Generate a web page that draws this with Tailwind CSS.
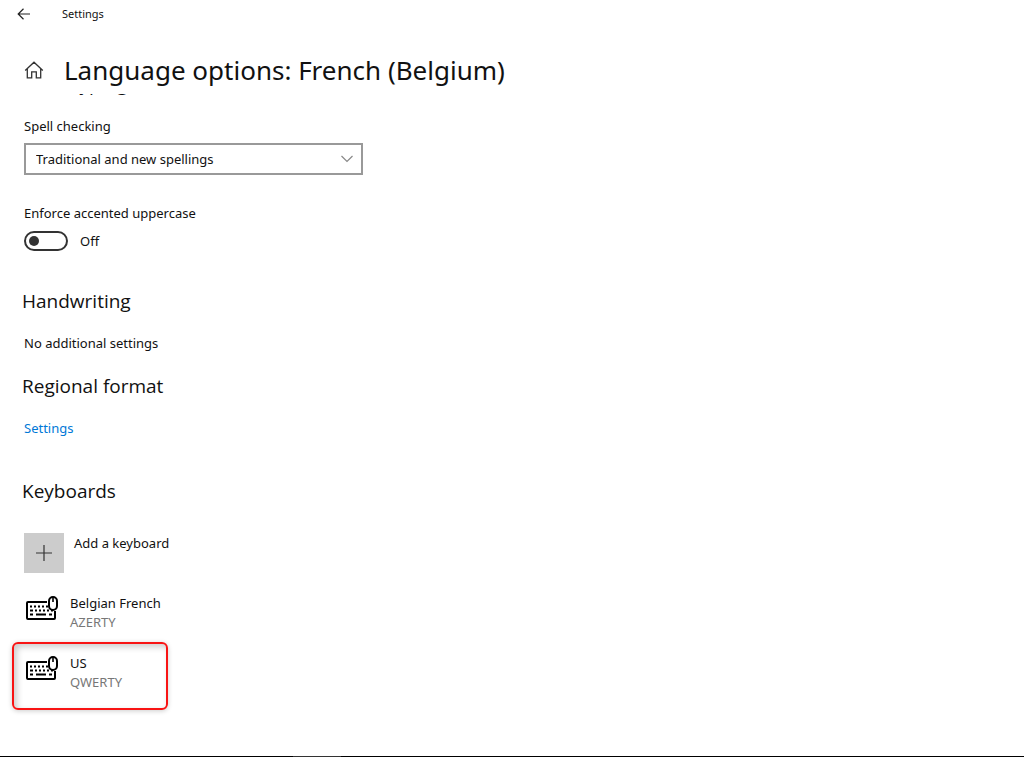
<!DOCTYPE html>
<html lang="en">
<head>
  <meta charset="UTF-8" />
  <meta name="viewport" content="width=device-width, initial-scale=1.0" />
  <title>Settings</title>
  <script src="https://cdn.jsdelivr.net/npm/@tailwindcss/browser@4"></script>
</head>
<body class="flex flex-col h-screen bg-white text-[#111] text-[13px] leading-5 font-['Noto_Sans','Open_Sans',sans-serif]">
  <header class="shrink-0 bg-white">
    <div class="flex items-center h-7 pl-[17px] gap-[31px]">
      <button type="button" aria-label="Back">
        <svg class="w-3.5 h-3" viewBox="0 0 14 12" fill="none" stroke="#222" stroke-width="1.2">
          <path d="M6.5 .8 1.2 6l5.3 5.2M1.2 6H13" />
        </svg>
      </button>
      <span class="text-[11px]">Settings</span>
    </div>
    <div class="flex items-center h-[66px] pl-6 pb-2.5 pt-7 gap-5">
      <a href="#" aria-label="Home">
        <svg class="w-5 h-5" viewBox="0 0 20 20" fill="none" stroke="#333" stroke-width="1.3">
          <path d="M1.2 10.5 10 2.2l8.8 8.3M3.3 8.8v9h4.4v-6h4.6v6h4.4v-9" />
        </svg>
      </a>
      <h1 class="text-[26px] leading-8">Language options: French (Belgium)</h1>
    </div>
  </header>

  <main class="flex-1 overflow-hidden px-6">
    <h2 class="-mt-6 -ml-0.5 text-[19px] leading-7 font-['Open_Sans',sans-serif]">Basic typing</h2>

    <div class="mt-[18px]">
      <label for="spelling" class="block">Spell checking</label>
      <div class="relative mt-[7px] w-[339px] max-w-full">
        <select id="spelling" class="appearance-none block w-full h-8 pl-2.5 pr-8 border-2 border-[#999] bg-white">
          <option>Traditional and new spellings</option>
        </select>
        <svg class="absolute right-2.5 top-3 w-3 h-2 pointer-events-none" viewBox="0 0 12 8" fill="none" stroke="#888" stroke-width="1.2">
          <path d="M.5 1 6 6.5 11.5 1" />
        </svg>
      </div>
    </div>

    <div class="mt-7">
      <label for="accented" class="block">Enforce accented uppercase</label>
      <div class="flex items-center gap-3 mt-2">
        <input
          id="accented"
          type="checkbox"
          role="switch"
          class="appearance-none flex items-center w-11 h-5 pl-[3px] border-2 border-[#333] rounded-full before:block before:w-2.5 before:h-2.5 before:rounded-full before:bg-[#333]"
        />
        <span>Off</span>
      </div>
    </div>

    <h2 class="mt-9 -ml-0.5 text-[19px] leading-7 font-['Open_Sans',sans-serif]">Handwriting</h2>
    <p class="mt-[18px]">No additional settings</p>

    <h2 class="mt-[19px] -ml-0.5 text-[19px] leading-7 font-['Open_Sans',sans-serif]">Regional format</h2>
    <a href="#" class="inline-block mt-[18px] text-[#0078d7]">Settings</a>

    <h2 class="mt-[39px] -ml-0.5 text-[19px] leading-7 font-['Open_Sans',sans-serif]">Keyboards</h2>
    <button type="button" class="flex items-start gap-2.5 mt-7">
      <span class="flex items-center justify-center w-10 h-10 bg-[#ccc]">
        <svg class="w-4 h-4" viewBox="0 0 16 16" fill="none" stroke="#333" stroke-width="1.2">
          <path d="M8 0v16M0 8h16" />
        </svg>
      </span>
      <span>Add a keyboard</span>
    </button>

    <ul class="flex flex-col items-start gap-2.5 mt-[21px] -ml-3 leading-[19px]">
      <li class="flex gap-3 pl-3.5">
        <svg class="w-8 h-6 mt-0.5" viewBox="0 0 32 24" fill="none" stroke="#000" stroke-width="2">
          <path d="M21 6H2a1 1 0 0 0-1 1v15a1 1 0 0 0 1 1h26a1 1 0 0 0 1-1v-7" />
          <path d="M23 5a4 4 0 0 1 8 0v5a4 4 0 0 1-8 0z" />
          <path d="M27 1v5" stroke-width="1.6" />
          <path d="M4 10.5h18" stroke-dasharray="2 2" stroke-width="1.8" />
          <path d="M4 14.5h3m2 0h2m2 0h2m2 0h2m2 0h2m2 0h2M4 18.5h3m3 0h10m3 0h3" stroke-width="1.8" />
        </svg>
        <div>
          <p>Belgian French</p>
          <p class="text-[#777]">AZERTY</p>
        </div>
      </li>
      <li class="flex gap-3 w-[156px] pl-3 pt-2.5 pb-4 border-2 border-[#f81414] rounded-md shadow-[0_1px_5px_rgba(0,0,0,0.2),inset_3px_3px_6px_rgba(0,0,0,0.2)]">
        <svg class="w-8 h-6 mt-0.5" viewBox="0 0 32 24" fill="none" stroke="#000" stroke-width="2">
          <path d="M21 6H2a1 1 0 0 0-1 1v15a1 1 0 0 0 1 1h26a1 1 0 0 0 1-1v-7" />
          <path d="M23 5a4 4 0 0 1 8 0v5a4 4 0 0 1-8 0z" />
          <path d="M27 1v5" stroke-width="1.6" />
          <path d="M4 10.5h18" stroke-dasharray="2 2" stroke-width="1.8" />
          <path d="M4 14.5h3m2 0h2m2 0h2m2 0h2m2 0h2m2 0h2M4 18.5h3m3 0h10m3 0h3" stroke-width="1.8" />
        </svg>
        <div>
          <p>US</p>
          <p class="text-[#777]">QWERTY</p>
        </div>
      </li>
    </ul>
  </main>

  <footer class="shrink-0 h-px bg-black pl-[293px]">
    <div class="w-12 h-px bg-[#333]"></div>
  </footer>
</body>
</html>
